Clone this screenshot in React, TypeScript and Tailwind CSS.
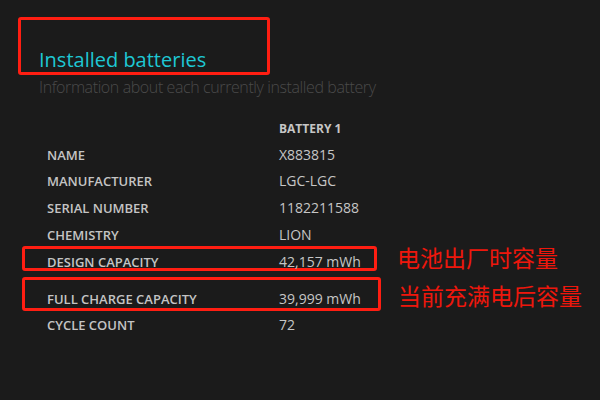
const rows = [
  ['NAME', 'X883815'],
  ['MANUFACTURER', 'LGC-LGC'],
  ['SERIAL NUMBER', '1182211588'],
  ['CHEMISTRY', 'LION'],
]

function Cells({ label, value }: { label: string; value: string }) {
  return (
    <>
      <span className="w-[232px] shrink-0 text-[13px] font-semibold text-[#c4c4c4]">{label}</span>
      <span className="text-[14px] text-[#c6c6c6]">{value}</span>
    </>
  )
}

export default function App() {
  return (
    <div className="w-[600px] h-[400px] overflow-hidden bg-[#1b1b1b] font-['Open_Sans',sans-serif]">
      <div className="ml-[18px] pt-[17px]">
        <div className="flex h-[58px] w-[252px] items-end rounded-[3px] border-[3px] border-[#ff1e12] pl-[18px]">
          <h1 className="text-[20px] leading-[24px] text-[#1ec8d4]">Installed batteries</h1>
        </div>
      </div>
      <p className="ml-[39px] mt-[1px] text-[16px] font-light leading-[22px] tracking-[-0.4px] text-[#4a4a4a]">
        Information about each currently installed battery
      </p>

      <div className="mt-[22px] pl-[279px] text-[12px] font-bold leading-[18px] text-[#c6c6c6]">BATTERY 1</div>

      <div className="mt-[3.6px] flex flex-col">
        {rows.map(([label, value]) => (
          <div key={label} className="flex h-[26.7px] items-baseline pl-[47px] leading-[26.7px]">
            <Cells label={label} value={value} />
          </div>
        ))}

        <div className="-mt-[2.2px] flex items-start pl-[22px]">
          <div className="flex h-[25px] w-[355px] items-baseline rounded-[3px] border-[3px] border-[#ff1e12] pl-[22px] pt-[3px] leading-[19px]">
            <Cells label="DESIGN CAPACITY" value="42,157 mWh" />
          </div>
          <span className="-mt-[3.3px] ml-[20px] font-['Noto_Sans_CJK_SC',sans-serif] text-[23px] leading-[28px] text-[#ee170c]">
            电池出厂时容量
          </span>
        </div>

        <div className="mt-[6px] flex items-start pl-[22px]">
          <div className="flex h-[34px] w-[359px] items-baseline rounded-[3px] border-[3px] border-[#ff1e12] pl-[22px] pt-[8.6px] leading-[19px]">
            <Cells label="FULL CHARGE CAPACITY" value="39,999 mWh" />
          </div>
          <span className="ml-[17px] mt-[3.7px] font-['Noto_Sans_CJK_SC',sans-serif] text-[23px] leading-[28px] text-[#ee170c]">
            当前充满电后容量
          </span>
        </div>

        <div className="mt-[1px] flex h-[26.7px] items-baseline pl-[47px] leading-[26.7px]">
          <Cells label="CYCLE COUNT" value="72" />
        </div>
      </div>
    </div>
  )
}
